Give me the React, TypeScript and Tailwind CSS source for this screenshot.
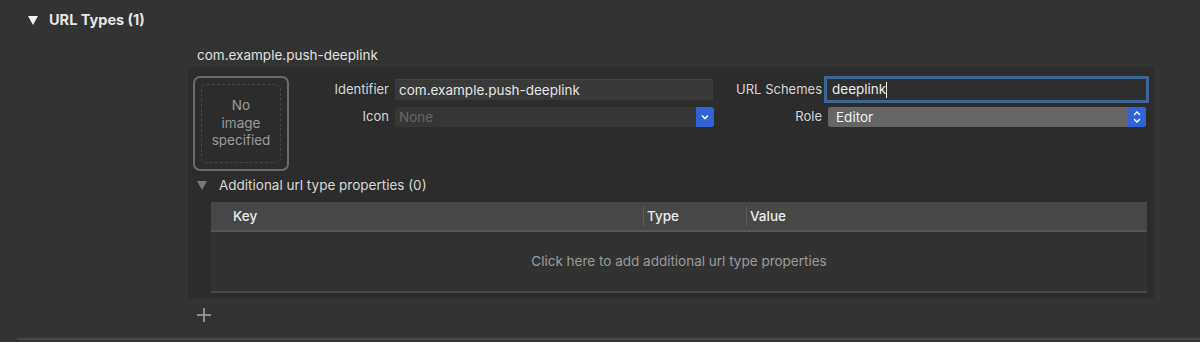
import React from "react";

function Triangle({ color }: { color: string }) {
  return (
    <svg width="10" height="9" viewBox="0 0 10 9">
      <polygon points="0,0 10,0 5,9" fill={color} />
    </svg>
  );
}

export default function App() {
  return (
    <div className="w-[1200px] h-[342px] bg-[#333333] overflow-hidden font-['Inter',sans-serif] text-[13.5px] text-[#dedede] flex flex-col">
      {/* Section header */}
      <div className="flex items-center h-[16px] mt-[12px] pl-[28px] gap-[11px]">
        <Triangle color="#f2f2f2" />
        <span className="font-bold text-[14.5px] text-[#e6e6e6]">URL Types (1)</span>
      </div>

      <div className="pl-[188px] flex flex-col">
        <div className="mt-[19px] h-[16px] leading-[16px] pl-[9px] text-[#e2e2e2]">com.example.push-deeplink</div>

        {/* Panel */}
        <div className="mt-[4px] w-[966px] h-[232px] bg-[#2c2c2c] flex flex-col">
          <div className="flex items-start">
            {/* image well */}
            <div className="ml-[5px] mt-[9px] w-[96px] h-[95px] rounded-[7px] border-2 border-[#6b6b6b] p-[6px]">
              <div className="w-full h-full rounded-[6px] border border-dashed border-[#474747] flex items-center justify-center text-center text-[#9b9b9b] leading-[17.5px] text-[13.5px]">
                No
                <br />
                image
                <br />
                specified
              </div>
            </div>

            {/* fields */}
            <div className="mt-[12px] flex flex-col gap-[7px]">
              <div className="flex items-center h-[21px]">
                <div className="w-[100px] text-right text-[13px] text-[#d6d6d6]">Identifier</div>
                <div className="ml-[6px] w-[318px] h-[21px] bg-[#393939] border-t border-[#424242] pl-[4px] flex items-center text-[#e6e6e6]">
                  com.example.push-deeplink
                </div>
                <div className="w-[109px] text-right text-[13px] text-[#d6d6d6]">URL Schemes</div>
                <div className="ml-[5px] w-[319px] h-[21px] bg-[#2f2f2f] ring-[3px] ring-[#3b6696] pl-[5px] flex items-center text-[#ececec]">
                  deeplink
                  <span className="inline-block w-px h-[16px] bg-[#f0f0f0]" />
                </div>
              </div>
              <div className="flex items-center h-[20px]">
                <div className="w-[100px] text-right text-[13px] text-[#d6d6d6]">Icon</div>
                <div className="ml-[6px] w-[319px] h-[20px] bg-[#363636] rounded-[3px] flex items-center">
                  <span className="flex-1 pl-[4px] text-[#666666]">None</span>
                  <div className="w-[18px] h-[20px] bg-[#2f63d6] rounded-r-[3px] flex items-center justify-center">
                    <svg width="8" height="6" viewBox="0 0 8 6">
                      <polyline points="1,1.5 4,4.5 7,1.5" fill="none" stroke="#ffffff" strokeWidth="1.6" />
                    </svg>
                  </div>
                </div>
                <div className="w-[108px] text-right text-[13px] text-[#d6d6d6]">Role</div>
                <div className="ml-[6px] w-[318px] h-[20px] bg-[#656565] rounded-[3px] flex items-center">
                  <span className="flex-1 pl-[8px] text-[#f2f2f2]">Editor</span>
                  <div className="w-[18px] h-[20px] bg-[#2f63d6] rounded-r-[3px] flex items-center justify-center">
                    <svg width="8" height="14" viewBox="0 0 8 14">
                      <polyline points="1,5 4,2 7,5" fill="none" stroke="#ffffff" strokeWidth="1.4" />
                      <polyline points="1,9 4,12 7,9" fill="none" stroke="#ffffff" strokeWidth="1.4" />
                    </svg>
                  </div>
                </div>
              </div>
            </div>
          </div>

          {/* Additional properties */}
          <div className="mt-[6px] h-[16px] flex items-center pl-[9px] gap-[12px]">
            <Triangle color="#787878" />
            <span className="text-[#d8d8d8]">Additional url type properties (0)</span>
          </div>

          {/* Table */}
          <div className="mt-[9px] ml-[23px] mr-[7px] flex flex-col">
            <div className="h-[30px] bg-[#474747] border-b-2 border-[#575757] flex items-center text-[#ececec] font-medium">
              <div className="w-[432px] pl-[22px]">Key</div>
              <div className="w-px h-[20px] bg-[#5c5c5c]" />
              <div className="w-[102px] pl-[3px]">Type</div>
              <div className="w-px h-[20px] bg-[#5c5c5c]" />
              <div className="flex-1 pl-[3px]">Value</div>
            </div>
            <div className="h-[61px] bg-[#323232] border-b-2 border-[#484848] flex items-center justify-center text-[#9a9a9a]">
              Click here to add additional url type properties
            </div>
          </div>
        </div>

        {/* add button */}
        <div className="mt-[9px] ml-[9px] w-[14px] h-[14px]">
          <svg width="14" height="14" viewBox="0 0 14 14">
            <line x1="7" y1="0" x2="7" y2="14" stroke="#a8a8a8" strokeWidth="1.5" />
            <line x1="0" y1="7" x2="14" y2="7" stroke="#a8a8a8" strokeWidth="1.5" />
          </svg>
        </div>
      </div>

      <div className="mt-[16px] ml-[17px] h-[2px] bg-[#474747]" />
    </div>
  );
}
